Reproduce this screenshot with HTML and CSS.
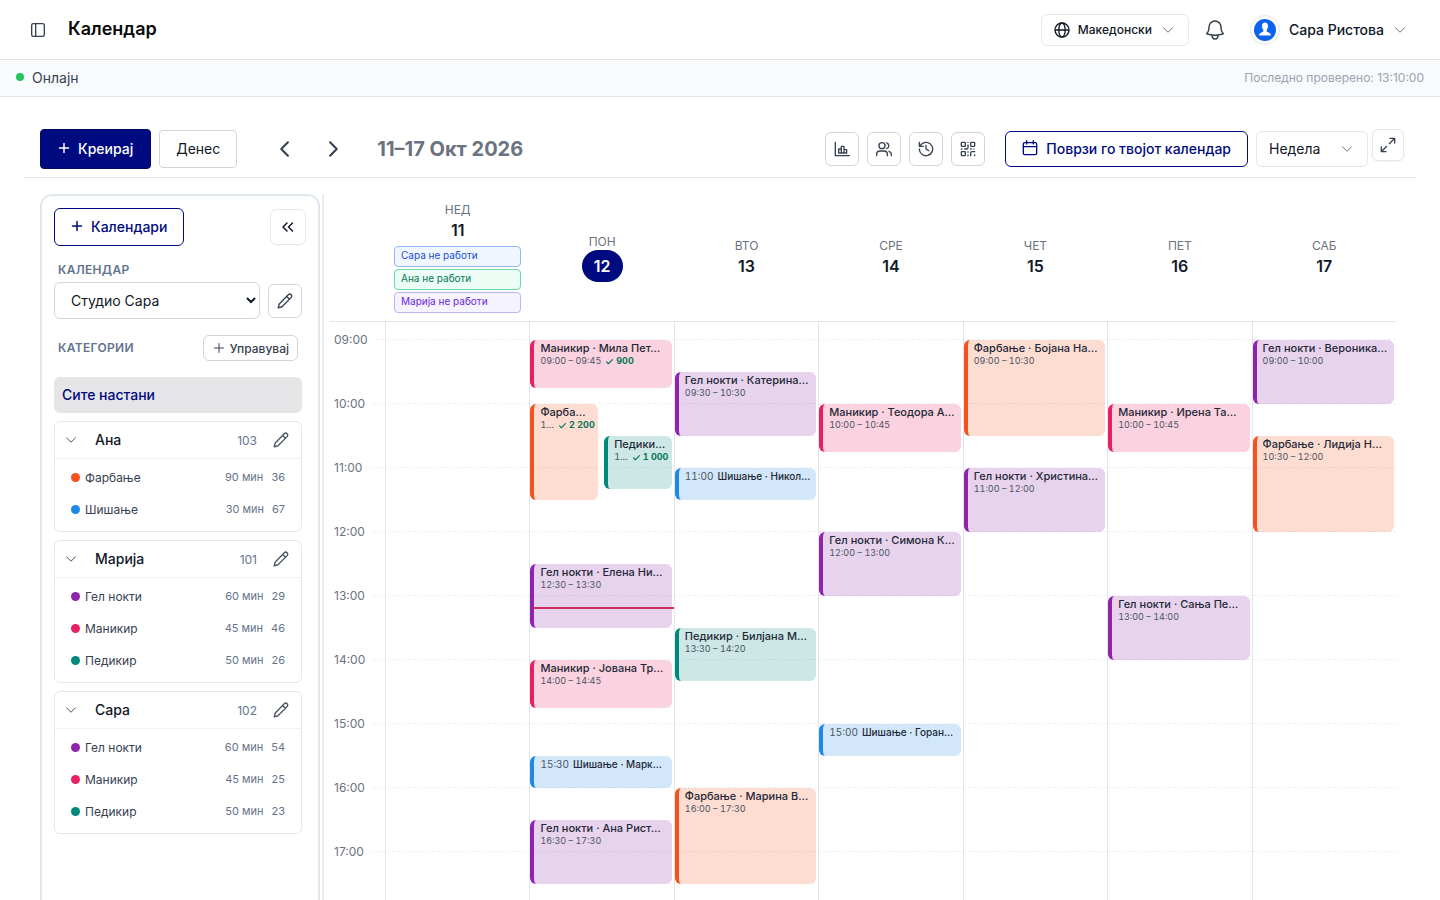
FILE: index.html
```html
<!DOCTYPE html>
<html lang="mk">
<head>
<meta charset="utf-8">
<meta name="viewport" content="width=device-width, initial-scale=1">
<title>Календар</title>
<link rel="stylesheet" href="styles.css">
</head>
<body>
<svg class="sprite" aria-hidden="true">
  <symbol id="i-plus" viewBox="0 0 24 24"><path d="M3 12h18M12 3v18"/></symbol>
  <symbol id="i-down" viewBox="0 0 24 24"><path d="m3 7.500 9 9 9-9"/></symbol>
  <symbol id="i-pencil" viewBox="0 0 24 24"><path d="M16.900 2.600a3 3 0 0 1 4.300 4.300L7.500 20.600 1.800 22.200l1.600-5.700zM14.500 5.200l4.200 4.200"/></symbol>
  <symbol id="i-check" viewBox="0 0 24 24"><path d="m4 13 5 5L20 7"/></symbol>
</svg>

<header class="topbar">
  <button class="plain" aria-label="Странична лента"><svg class="icon s16" viewBox="0 0 24 24"><rect x="2.500" y="2.500" width="19" height="19" rx="2.500"/><path d="M8.500 2.500v19"/></svg></button>
  <h1 class="page-title">Календар</h1>
  <button class="lang"><svg class="icon s16" viewBox="0 0 24 24"><circle cx="12" cy="12" r="10.500"/><ellipse cx="12" cy="12" rx="4.800" ry="10.500"/><path d="M2 12h20"/></svg>Македонски<svg class="icon s12 muted"><use href="#i-down"/></svg></button>
  <button class="plain bell" aria-label="Известувања"><svg class="icon s24" viewBox="0 0 24 24"><path d="M14.900 17.100a24 24 0 0 0 5.400-1.300A9 9 0 0 1 18 9.800V9A6 6 0 0 0 6 9v.8a9 9 0 0 1-2.300 6c1.700.6 3.600 1.100 5.500 1.300m5.700 0a24.300 24.300 0 0 1-5.700 0m5.700 0a3 3 0 1 1-5.700 0"/></svg></button>
  <button class="user">
    <span class="avatar"><svg viewBox="0 0 22 22"><circle class="av-bg" cx="11" cy="11" r="11"/><path class="av-fg" d="M11 3.600c2 0 3.100 1.500 3 3.600-.1 1.500-.5 2.700-1.300 3.500v1.500c.3 1.200 3.800 1.200 4.100 3.400v.9H5.200v-.9c.3-2.200 3.800-2.200 4.100-3.400v-1.500C8.500 9.900 8.100 8.700 8 7.200c-.1-2.100 1-3.600 3-3.600z"/></svg></span>
    Сара Ристова<svg class="icon s12 muted"><use href="#i-down"/></svg>
  </button>
</header>

<div class="status">
  <span class="online">Онлајн</span>
  <span class="checked">Последно проверено: 13:10:00</span>
</div>

<main class="main">
  <div class="toolbar">
    <button class="btn create"><svg class="icon s12 bold"><use href="#i-plus"/></svg>Креирај</button>
    <button class="btn today">Денес</button>
    <div class="nav">
      <button class="plain" aria-label="Претходна"><svg class="icon s20" viewBox="0 0 24 24"><path d="m15.500 4-8 8 8 8"/></svg></button>
      <button class="plain" aria-label="Следна"><svg class="icon s20" viewBox="0 0 24 24"><path d="m8.500 4 8 8-8 8"/></svg></button>
    </div>
    <h2 class="range">11–17 Окт 2026</h2>
    <div class="tools">
      <button class="tool" aria-label="Статистика"><svg class="icon s16" viewBox="0 0 24 24"><path d="M2 2v20h21M7 12h4v6H7zM11 8h4v10h-4zM15 13h4v5h-4z"/></svg></button>
      <button class="tool" aria-label="Клиенти"><svg class="icon s16" viewBox="0 0 24 24"><circle cx="9" cy="7" r="4.500"/><path d="M1 22v-2a5 5 0 0 1 5-5h6a5 5 0 0 1 5 5v2M16 2.700a4.500 4.500 0 0 1 0 8.600M19.500 15.400A5 5 0 0 1 23 20v2"/></svg></button>
      <button class="tool" aria-label="Историја"><svg class="icon s16" viewBox="0 0 24 24"><path d="M2 12a10 10 0 1 0 3-7.100L2 8M2 2v6h6M12 6.500V12l4 2.500"/></svg></button>
      <button class="tool" aria-label="QR код"><svg class="icon s16" viewBox="0 0 24 24"><rect x="2" y="2" width="6" height="6" rx="1"/><rect x="16" y="2" width="6" height="6" rx="1"/><rect x="2" y="16" width="6" height="6" rx="1"/><path d="M22 16h-4a2 2 0 0 0-2 2v4M22 21v1M12 6v4a2 2 0 0 1-2 2H7M2 12h1M12 2v.01M12 16v1M16 12h1M21 12v.01M12 21v1"/></svg></button>
    </div>
    <button class="btn connect"><svg class="icon s16" viewBox="0 0 24 24"><rect x="2" y="4" width="20" height="18" rx="2"/><path d="M7 1v5M17 1v5M2 10h20"/></svg>Поврзи го твојот календар</button>
    <label class="view"><select aria-label="Приказ"><option>Недела</option></select><svg class="icon s12 muted"><use href="#i-down"/></svg></label>
    <button class="expand" aria-label="Цел екран"><svg class="icon s16" viewBox="0 0 24 24"><path d="M15 2h7v7M22 2l-8 8M9 22H2v-7M2 22l8-8"/></svg></button>
  </div>

  <div class="content">
    <aside class="sidebar">
      <div class="side-top">
        <button class="btn calendars"><svg class="icon s12 bold"><use href="#i-plus"/></svg>Календари</button>
        <button class="collapse" aria-label="Собери"><svg class="icon s12 bold" viewBox="0 0 24 24"><path d="m10 4-8 8 8 8M21 4l-8 8 8 8"/></svg></button>
      </div>
      <div class="side-body">
        <label class="caption" for="cal">КАЛЕНДАР</label>
        <div class="cal-row">
          <select id="cal" class="cal-select"><option>Студио Сара</option></select>
          <button class="tool" aria-label="Уреди"><svg class="icon s16"><use href="#i-pencil"/></svg></button>
        </div>
        <div class="cat-row">
          <span class="caption">КАТЕГОРИИ</span>
          <button class="manage"><svg class="icon s12"><use href="#i-plus"/></svg>Управувај</button>
        </div>
        <button class="all">Сите настани</button>

        <section class="card">
          <div class="card-head"><svg class="icon s12"><use href="#i-down"/></svg><h3>Ана</h3><span>103</span><button class="plain" aria-label="Уреди Ана"><svg class="icon s16"><use href="#i-pencil"/></svg></button></div>
          <ul>
            <li class="orange"><b>Фарбање</b><span>90 мин</span><span>36</span></li>
            <li class="blue"><b>Шишање</b><span>30 мин</span><span>67</span></li>
          </ul>
        </section>
        <section class="card">
          <div class="card-head"><svg class="icon s12"><use href="#i-down"/></svg><h3>Марија</h3><span>101</span><button class="plain" aria-label="Уреди Марија"><svg class="icon s16"><use href="#i-pencil"/></svg></button></div>
          <ul>
            <li class="purple"><b>Гел нокти</b><span>60 мин</span><span>29</span></li>
            <li class="pink"><b>Маникир</b><span>45 мин</span><span>46</span></li>
            <li class="teal"><b>Педикир</b><span>50 мин</span><span>26</span></li>
          </ul>
        </section>
        <section class="card">
          <div class="card-head"><svg class="icon s12"><use href="#i-down"/></svg><h3>Сара</h3><span>102</span><button class="plain" aria-label="Уреди Сара"><svg class="icon s16"><use href="#i-pencil"/></svg></button></div>
          <ul>
            <li class="purple"><b>Гел нокти</b><span>60 мин</span><span>54</span></li>
            <li class="pink"><b>Маникир</b><span>45 мин</span><span>25</span></li>
            <li class="teal"><b>Педикир</b><span>50 мин</span><span>23</span></li>
          </ul>
        </section>
      </div>
    </aside>

    <div class="calendar">
      <div class="days-head">
        <div class="day-head"><span>НЕД</span><strong>11</strong>
          <div class="chips"><span class="chip c-blue">Сара не работи</span><span class="chip c-green">Ана не работи</span><span class="chip c-violet">Марија не работи</span></div>
        </div>
        <div class="day-head current"><span>ПОН</span><strong>12</strong></div>
        <div class="day-head"><span>ВТО</span><strong>13</strong></div>
        <div class="day-head"><span>СРЕ</span><strong>14</strong></div>
        <div class="day-head"><span>ЧЕТ</span><strong>15</strong></div>
        <div class="day-head"><span>ПЕТ</span><strong>16</strong></div>
        <div class="day-head"><span>САБ</span><strong>17</strong></div>
      </div>
      <div class="week">
        <div class="hours">
          <div class="hour">09:00</div><div class="hour">10:00</div><div class="hour">11:00</div><div class="hour">12:00</div><div class="hour">13:00</div><div class="hour">14:00</div><div class="hour">15:00</div><div class="hour">16:00</div><div class="hour">17:00</div>
        </div>
        <div class="days">
          <div class="day"></div>
          <div class="day">
            <article class="event pink" style="--slot:1;--mins:45"><h4>Маникир · Мила Пет…</h4><p><span>09:00 – 09:45</span><em><svg class="icon"><use href="#i-check"/></svg>900</em></p></article>
            <article class="event orange left" style="--slot:5;--mins:90"><h4>Фарба…</h4><p><span>1…</span><em><svg class="icon"><use href="#i-check"/></svg>2 200</em></p></article>
            <article class="event teal right" style="--slot:7;--mins:50"><h4>Педики…</h4><p><span>1…</span><em><svg class="icon"><use href="#i-check"/></svg>1 000</em></p></article>
            <article class="event purple" style="--slot:15;--mins:60"><h4>Гел нокти · Елена Ни…</h4><p><span>12:30 – 13:30</span></p></article>
            <article class="event pink" style="--slot:21;--mins:45"><h4>Маникир · Јована Тр…</h4><p><span>14:00 – 14:45</span></p></article>
            <article class="event blue short" style="--slot:27;--mins:30"><time>15:30</time><h4>Шишање · Марк…</h4></article>
            <article class="event purple" style="--slot:31;--mins:60"><h4>Гел нокти · Ана Рист…</h4><p><span>16:30 – 17:30</span></p></article>
            <div class="now" style="--mins:250"></div>
          </div>
          <div class="day">
            <article class="event purple" style="--slot:3;--mins:60"><h4>Гел нокти · Катерина…</h4><p><span>09:30 – 10:30</span></p></article>
            <article class="event blue short" style="--slot:9;--mins:30"><time>11:00</time><h4>Шишање · Никол…</h4></article>
            <article class="event teal" style="--slot:19;--mins:50"><h4>Педикир · Билјана М…</h4><p><span>13:30 – 14:20</span></p></article>
            <article class="event orange" style="--slot:29;--mins:90"><h4>Фарбање · Марина В…</h4><p><span>16:00 – 17:30</span></p></article>
          </div>
          <div class="day">
            <article class="event pink" style="--slot:5;--mins:45"><h4>Маникир · Теодора А…</h4><p><span>10:00 – 10:45</span></p></article>
            <article class="event purple" style="--slot:13;--mins:60"><h4>Гел нокти · Симона К…</h4><p><span>12:00 – 13:00</span></p></article>
            <article class="event blue short" style="--slot:25;--mins:30"><time>15:00</time><h4>Шишање · Горан…</h4></article>
          </div>
          <div class="day">
            <article class="event orange" style="--slot:1;--mins:90"><h4>Фарбање · Бојана На…</h4><p><span>09:00 – 10:30</span></p></article>
            <article class="event purple" style="--slot:9;--mins:60"><h4>Гел нокти · Христина…</h4><p><span>11:00 – 12:00</span></p></article>
          </div>
          <div class="day">
            <article class="event pink" style="--slot:5;--mins:45"><h4>Маникир · Ирена Та…</h4><p><span>10:00 – 10:45</span></p></article>
            <article class="event purple" style="--slot:17;--mins:60"><h4>Гел нокти · Сања Пе…</h4><p><span>13:00 – 14:00</span></p></article>
          </div>
          <div class="day">
            <article class="event purple" style="--slot:1;--mins:60"><h4>Гел нокти · Вероника…</h4><p><span>09:00 – 10:00</span></p></article>
            <article class="event orange" style="--slot:7;--mins:90"><h4>Фарбање · Лидија Н…</h4><p><span>10:30 – 12:00</span></p></article>
          </div>
        </div>
      </div>
    </div>
  </div>
</main>
</body>
</html>
```
FILE: styles.css
```css
* { box-sizing: border-box; }

body {
  margin: 0;
  height: 100vh;
  overflow: hidden;
  display: flex;
  flex-direction: column;
  font-family: Inter, "Liberation Sans", sans-serif;
  font-size: 14px;
  color: #111827;
  background: #fff;
}

h1, h2, h3, h4, p, ul { margin: 0; padding: 0; font-weight: 400; }
ul { list-style: none; }
button, select { font: inherit; color: inherit; background: #fff; cursor: pointer; }
button { display: flex; align-items: center; justify-content: center; padding: 0; }

.sprite { display: none; }
.icon { flex: none; fill: none; stroke: currentColor; stroke-width: 2; stroke-linecap: round; stroke-linejoin: round; }
.s12 { width: 12px; height: 12px; }
.s16 { width: 16px; height: 16px; }
.s20 { width: 20px; height: 20px; }
.s24 { width: 24px; height: 24px; }
.bold { stroke-width: 3; }
.muted { color: #6b7280; }
.plain { border: 0; background: none; color: #374151; }

/* Top bar */
.topbar { flex: none; display: flex; align-items: center; height: 60px; padding: 0 34px 0 30px; border-bottom: 1px solid #e2e5ea; }
.page-title { margin-left: 22px; padding-bottom: 2px; font-size: 18px; line-height: 24px; font-weight: 600; color: #0a0a0a; }
.lang { margin-left: auto; height: 32px; padding: 0 14px 0 12px; gap: 8px; border: 1px solid #e5e7eb; border-radius: 6px; font-size: 12px; font-weight: 500; }
.lang .muted { margin-left: 2px; }
.bell { margin: 0 23px 0 14px; }
.bell .icon { stroke-width: 1.500; }
.user { gap: 9px; border: 0; font-size: 14px; font-weight: 500; }
.user .muted { margin-left: 1px; }
.avatar { width: 30px; height: 30px; padding: 3px; border: 1px solid #e5e7eb; border-radius: 50%; }
.avatar svg { display: block; }
.av-bg { fill: #0b63ee; }
.av-fg { fill: #fff; }

/* Connection status */
.status { flex: none; display: flex; align-items: center; justify-content: space-between; height: 37px; padding: 0 16px 2px; background: #f8fafc; border-bottom: 1px solid #e2e5ea; }
.online { display: flex; align-items: center; gap: 8px; color: #374151; }
.online::before { content: ""; width: 8px; height: 8px; border-radius: 50%; background: #22c55e; }
.checked { font-size: 12px; color: #9ca3af; }

/* Toolbar */
.main { flex: 1; min-height: 0; display: flex; flex-direction: column; padding: 32px 24px 0; }
.toolbar { flex: none; display: flex; align-items: center; height: 49px; padding: 0 12px 8px 16px; border-bottom: 1px solid #e5e7eb; }
.btn { gap: 8px; padding: 0 16px 2px; border: 1px solid #d1d5db; border-radius: 6px; font-weight: 500; }
.create { height: 40px; padding: 0 17px 2px; background: #000a80; border-color: #000a60; border-radius: 4px; color: #fff; }
.today { height: 38px; margin-left: 8px; border-radius: 4px; font-weight: 400; }
.nav { display: flex; gap: 28px; margin-left: 38px; }
.nav .icon { stroke-width: 2.500; }
.range { margin-left: 34px; font-size: 20px; font-weight: 700; color: #6b7280; }
.tools { display: flex; gap: 8px; margin-left: auto; }
.tool { flex: none; width: 34px; height: 34px; border: 1px solid #d1d5db; border-radius: 6px; color: #374151; }
.connect { height: 36px; margin-left: 20px; border-color: #000a80; color: #000a80; }
.view { display: flex; align-items: center; width: 112px; height: 36px; margin-left: 8px; padding-right: 14px; border: 1px solid #e5e7eb; border-radius: 6px; }
.view select { flex: 1; min-width: 0; height: 34px; padding: 0 0 2px 12px; border: 0; appearance: none; background: none; }
.expand { align-self: flex-start; width: 32px; height: 32px; margin-left: 4px; border: 1px solid #e5e7eb; border-radius: 6px; color: #374151; box-shadow: 0 1px 2px #0000000d; }

/* Body */
.content { flex: 1; min-height: 0; display: flex; padding: 16px 20px 0 16px; }

/* Sidebar */
.sidebar { flex: none; width: 280px; padding: 12px; border: 2px solid #e2e8f0; border-bottom: 0; border-radius: 12px 12px 0 0; }
.side-top { display: flex; align-items: center; justify-content: space-between; }
.calendars { height: 38px; border-color: #000a80; color: #000a80; }
.collapse { width: 36px; height: 36px; border: 1px solid #e5e7eb; border-radius: 6px; }
.side-body { padding-right: 4px; }
.caption { display: block; padding-left: 4px; font-size: 12px; line-height: 16px; font-weight: 600; letter-spacing: 0.3px; color: #64748b; }
.side-body > .caption { margin: 16px 0 4px; }
.cal-row { display: flex; align-items: center; gap: 8px; }
.cal-select { flex: 1; min-width: 0; height: 37px; padding-left: 12px; border: 1px solid #d1d5db; border-radius: 6px; }
.cat-row { display: flex; align-items: center; justify-content: space-between; margin: 16px 0; padding-right: 4px; }
.manage { height: 26px; padding: 0 8px 0 9px; gap: 5px; border: 1px solid #d1d5db; border-radius: 6px; font-size: 12px; font-weight: 500; color: #374151; }
.all { width: 100%; height: 36px; padding: 0 8px 2px; justify-content: flex-start; border: 0; border-radius: 6px; background: #e5e5e7; color: #000a80; font-weight: 500; }
.card { margin-top: 8px; border: 1px solid #e5e7eb; border-radius: 6px; }
.card-head { display: flex; align-items: center; height: 37px; padding: 0 12px 0 10px; border-bottom: 1px solid #f1f2f4; color: #4b5563; }
.card-head h3 { flex: 1; margin-left: 18px; padding-bottom: 2px; font-size: 14px; font-weight: 500; color: #111827; }
.card-head span { margin-right: 16px; font-size: 12px; color: #64748b; }
.card-head .plain { color: #4b5563; }
.card ul { padding: 2px 16px 6px; }
.card li { display: flex; align-items: center; height: 32px; font-size: 11px; color: #64748b; }
.card li::before { content: ""; width: 9px; height: 9px; margin-right: 5px; border-radius: 50%; background: var(--c); }
.card li b { flex: 1; font-size: 12px; font-weight: 400; color: #374151; }
.card li span + span { margin-left: 8px; }

.orange { --c: #f4511e; --bg: #f4511e33; }
.blue { --c: #1e88e5; --bg: #1e88e533; }
.purple { --c: #8e24aa; --bg: #8e24aa33; }
.pink { --c: #e91e63; --bg: #e91e6333; }
.teal { --c: #00897b; --bg: #00897b33; }

/* Calendar */
.calendar { flex: 1; min-width: 0; margin-left: 2px; padding-left: 6px; border-left: 2px solid #eceef1; }
.days-head { display: grid; grid-template-columns: repeat(7, 1fr); height: 128px; padding-left: 55px; border-bottom: 1px solid #e2e5ea; }
.day-head { display: flex; flex-direction: column; align-items: center; justify-content: center; min-width: 0; padding: 0 8px 0 9px; }
.day-head > span { font-size: 12px; line-height: 16px; color: #6b7280; }
.day-head strong { font-size: 16px; line-height: 24px; font-weight: 600; }
.current strong { padding: 0 12px; border-radius: 16px; line-height: 32px; background: #000a80; color: #fff; }
.chips { align-self: stretch; display: grid; gap: 2px; margin-top: 4px; }
.chip { height: 21px; padding: 0 6px; border: 1px solid; border-radius: 4px; font-size: 10px; line-height: 17px; }
.c-blue { color: #1d4ed8; background: #eff6ff; border-color: #93b8f5; }
.c-green { color: #047857; background: #ecfdf5; border-color: #6ed8ae; }
.c-violet { color: #6d28d9; background: #f5f3ff; border-color: #c4b0f5; }

.week { display: grid; }
.hours, .days { grid-area: 1 / 1; }
.hours { padding-top: 9px; }
.hour { display: flex; gap: 8px; height: 64px; padding-left: 4px; font-size: 12px; line-height: 17px; color: #6b7280; }
.hour::after { content: ""; flex: 1; height: 1px; margin-top: 8px; border-top: 1px dashed #eff1f4; }
.days { display: grid; grid-template-columns: repeat(7, 1fr); padding-left: 55px; }
.day { position: relative; display: grid; grid-template-columns: 1fr 1fr; grid-template-rows: repeat(36, 16px); column-gap: 6px; min-width: 0; padding: 18px 2px 0 0; border-left: 1px solid #e2e5ea; }
.event { grid-column: 1 / -1; grid-row-start: var(--slot); align-self: start; height: calc(var(--mins) * 64px / 60); min-width: 0; margin-bottom: -96px; padding: 1px 4px 0 6px; overflow: hidden; border-left: 4px solid var(--c); border-radius: 6px; background: var(--bg); color: #1f2937; font-variant-numeric: tabular-nums; }
.event.left { grid-column: 1; }
.event.right { grid-column: 2; }
.event h4 { overflow: hidden; text-overflow: ellipsis; white-space: nowrap; font-size: 11px; line-height: 15px; font-weight: 500; }
.event p { display: flex; gap: 4px; font-size: 9px; line-height: 10px; color: #4b5563; white-space: nowrap; }
.event em { flex: none; display: flex; align-items: center; gap: 2px; font-style: normal; font-weight: 700; color: #047857; }
.event em .icon { width: 9px; height: 9px; stroke-width: 3; }
.event.short { display: flex; gap: 4px; }
.short time { font-size: 10px; line-height: 15px; color: #4b5563; }
.event.short h4 { font-size: 10px; }
.now { position: absolute; left: 3px; right: -1px; top: calc(18px + var(--mins) * 64px / 60); height: 2px; background: #cf2f5c; }
```
